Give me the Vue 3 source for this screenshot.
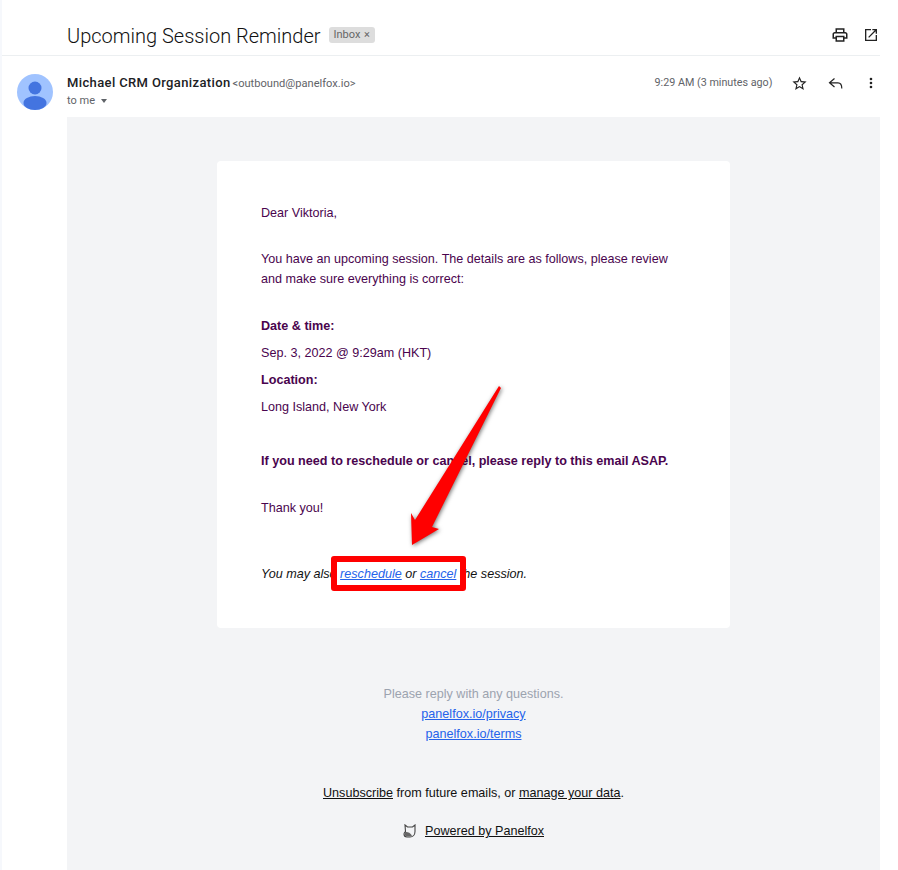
<template>
  <div class="mail">
    <header class="subject-bar">
      <h1 class="subject">Upcoming Session Reminder</h1>
      <span class="label">Inbox <span class="label-x">×</span></span>
      <div class="subject-icons">
        <svg class="icon" viewBox="0 0 24 24" width="18" height="18">
          <path fill="#222" d="M19 8h-1V3H6v5H5c-1.66 0-3 1.34-3 3v6h4v4h12v-4h4v-6c0-1.66-1.34-3-3-3zM8 5h8v3H8V5zm8 14H8v-4h8v4zm4-4h-2v-2H6v2H4v-4c0-.55.45-1 1-1h14c.55 0 1 .45 1 1v4z" />
        </svg>
        <svg class="icon" viewBox="0 0 24 24" width="16" height="16">
          <path fill="#222" d="M19 19H5V5h7V3H3v18h18v-9h-2v7zM14 3v2h3.59l-9.83 9.83 1.41 1.41L19 6.41V10h2V3h-7z" />
        </svg>
      </div>
    </header>

    <div class="sender-row">
      <svg class="avatar" viewBox="0 0 36 36" width="36" height="36">
        <circle cx="18" cy="18" r="18" fill="#a0c3ff" />
        <circle cx="18" cy="14" r="6.500" fill="#4374e0" />
        <ellipse cx="18" cy="29" rx="11.500" ry="7" fill="#4374e0" />
      </svg>
      <div class="sender-info">
        <div class="sender-line">
          <span class="sender-name">Michael CRM Organization</span>
          <span class="sender-mail">&lt;outbound@panelfox.io&gt;</span>
        </div>
        <div class="to-line">to me <span class="caret"></span></div>
      </div>
      <div class="sender-meta">
        <span class="time">9:29 AM (3 minutes ago)</span>
        <svg class="icon" viewBox="0 0 24 24" width="17" height="17">
          <path fill="#222" d="M22 9.24l-7.190-.62L12 2 9.190 8.630 2 9.240l5.460 4.730L5.820 21 12 17.270 18.180 21l-1.630-7.030L22 9.240zM12 15.400l-3.760 2.270 1-4.280-3.320-2.880 4.380-.38L12 6.100l1.710 4.040 4.380.38-3.320 2.880 1 4.280L12 15.400z" />
        </svg>
        <svg class="icon" viewBox="0 0 19 19" width="19" height="19">
          <path fill="none" stroke="#222" stroke-width="1.200" d="M8.500 4.500 L3.500 8.800 L8.500 13 M3.500 8.800 H12 C14.500 8.800 15.800 10.500 15.800 14.500" />
        </svg>
        <svg class="icon" viewBox="0 0 24 24" width="16" height="16">
          <path fill="#222" d="M12 8a2 2 0 1 0 0-4 2 2 0 0 0 0 4zm0 2a2 2 0 1 0 0 4 2 2 0 0 0 0-4zm0 6a2 2 0 1 0 0 4 2 2 0 0 0 0-4z" />
        </svg>
      </div>
    </div>

    <main class="panel">
      <section class="card">
        <p>Dear Viktoria,</p>
        <p class="gap-26">You have an upcoming session. The details are as follows, please review and make sure everything is correct:</p>
        <p class="gap-27"><strong>Date &amp; time:</strong></p>
        <p class="gap-7">Sep. 3, 2022 @ 9:29am (HKT)</p>
        <p class="gap-7"><strong>Location:</strong></p>
        <p class="gap-7">Long Island, New York</p>
        <p class="gap-34"><strong>If you need to reschedule or cancel, please reply to this email ASAP.</strong></p>
        <p class="gap-27">Thank you!</p>
        <p class="note">You may also <a href="#">reschedule</a> or <a href="#">cancel</a> the session.</p>
      </section>

      <footer class="foot">
        <p class="muted">Please reply with any questions.</p>
        <p><a href="#">panelfox.io/privacy</a></p>
        <p><a href="#">panelfox.io/terms</a></p>
        <p class="unsub"><a class="dark" href="#">Unsubscribe</a> from future emails, or <a class="dark" href="#">manage your data</a>.</p>
        <p class="powered">
          <svg viewBox="0 0 14 14" width="14" height="14">
            <path fill="none" stroke="#444" stroke-width="1.100" d="M2 1 L4.500 3 H9.500 L12 1 V7.500 C12 10.500 10 13 7 13 H4 C2 13 1 11.500 1 10 C1 8.800 2 8 2.500 7.500 Z" />
            <path fill="#666" d="M2 8 C4.500 7.500 7 8.500 9 11.500 C7 13 3 13 1.500 11 Z" />
          </svg>
          <a class="dark" href="#">Powered by Panelfox</a>
        </p>
      </footer>
    </main>

    <!-- annotation drawn over the mail -->
    <div class="mark-box"></div>
    <svg class="mark-arrow" viewBox="0 0 105 170" width="105" height="170">
      <path fill="#f00" d="M94 6 L96 8 L27 147 L34 149 L7 165 L6 133 L10 140 Z" />
    </svg>
  </div>
</template>

<script setup>
</script>

<style>
html, body {
  margin: 0;
  background: #fff;
}
</style>

<style scoped>
.mail {
  position: relative;
  width: 898px;
  height: 870px;
  overflow: hidden;
  box-sizing: border-box;
  border-left: 2px solid #f6f8fc;
  font-family: Roboto, "Liberation Sans", sans-serif;
  color: #202124;
}
.subject-bar {
  display: flex;
  align-items: center;
  width: 878px;
  height: 56px;
  padding: 15px 1px 0 65px;
  box-sizing: border-box;
  border-bottom: 1px solid #eceff1;
}
.subject {
  margin: 1px 0 0;
  font-size: 20px;
  font-weight: 300;
  line-height: 28px;
  color: #111;
}
.label {
  margin-left: 9px;
  padding: 0 5px 0 4px;
  background: #dddddd;
  border-radius: 3px;
  font-size: 11px;
  line-height: 16px;
  color: #666;
}
.label-x {
  margin-left: 1px;
}
.subject-icons {
  display: flex;
  align-items: center;
  gap: 14.500px;
  margin-left: auto;
}
.icon {
  display: block;
  flex: none;
}
.sender-row {
  display: flex;
  width: 878px;
  height: 61px;
  padding: 18px 1px 0 15px;
  box-sizing: border-box;
}
.avatar {
  flex: none;
}
.sender-info {
  margin-left: 14px;
}
.sender-line {
  line-height: 16px;
}
.sender-name {
  font-size: 13px;
  font-weight: 500;
  letter-spacing: .37px;
}
.sender-mail {
  margin-left: 2px;
  font-size: 11.100px;
  color: #5f6368;
}
.to-line {
  margin-top: 1px;
  font-size: 11px;
  line-height: 16px;
  color: #5f6368;
}
.caret {
  display: inline-block;
  margin-left: 3px;
  vertical-align: middle;
  border: 3.500px solid transparent;
  border-top: 4px solid #5f6368;
  border-bottom: 0;
}
.sender-meta {
  display: flex;
  align-items: center;
  gap: 18px;
  height: 18px;
  margin-left: auto;
}
.time {
  font-size: 10.750px;
  line-height: 16px;
  color: #5f6368;
  margin-right: .500px;
}
.panel {
  width: 813px;
  height: 753px;
  margin-left: 65px;
  padding-top: 44px;
  box-sizing: border-box;
  background: #f3f4f6;
  font-family: "Liberation Sans", Arial, sans-serif;
  font-size: 12.600px;
  line-height: 20px;
}
.card {
  width: 513px;
  margin-left: 150px;
  padding: 42px 44px 44px;
  box-sizing: border-box;
  background: #fff;
  border-radius: 4px;
  color: #4a044e;
}
p {
  margin: 0;
}
.gap-26 { margin-top: 26px; }
.gap-27 { margin-top: 27px; }
.gap-7 { margin-top: 7px; }
.gap-34 { margin-top: 34px; }
.note {
  margin-top: 46px;
  font-style: italic;
  color: #111;
}
a {
  color: #2563eb;
}
.foot {
  margin-top: 56px;
  text-align: center;
  color: #111;
}
.muted {
  color: #9ca3af;
}
.unsub {
  margin-top: 39px;
}
.powered {
  display: flex;
  justify-content: center;
  align-items: center;
  gap: 8px;
  margin-top: 18px;
}
a.dark {
  color: #111;
}
.mark-box {
  position: absolute;
  left: 329px;
  top: 556px;
  width: 123px;
  height: 23px;
  border: 6px solid #f00;
  border-radius: 3px;
}
.mark-arrow {
  position: absolute;
  left: 403px;
  top: 380px;
  filter: drop-shadow(1px 1px 2px rgba(0, 0, 0, .55));
}
</style>
